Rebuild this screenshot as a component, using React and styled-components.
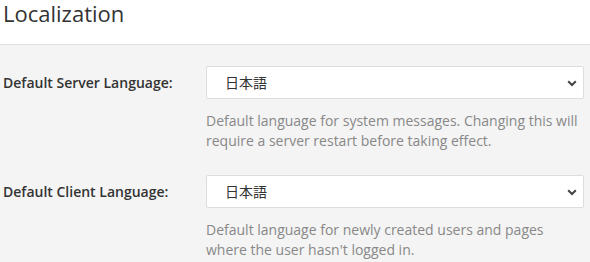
import React from "react";
import styled, { createGlobalStyle } from "styled-components";

const Global = createGlobalStyle`
  html, body { margin: 0; padding: 0; background: #f4f4f4; }
  body { font-family: "Open Sans", "Noto Sans CJK JP", sans-serif; color: #333; }
`;

const Page = styled.div`
  width: 590px;
  height: 262px;
  overflow: hidden;
  background: #f4f4f4;
`;

const Header = styled.div`
  background: #fff;
  height: 44px;
  border-bottom: 1px solid #e0e0e0;
  box-sizing: content-box;
`;

const Title = styled.h3`
  margin: 0;
  padding: 0 0 0 3px;
  font-size: 22px;
  font-weight: 400;
  line-height: 27px;
  color: #333;
`;

const Body = styled.div`
  padding: 21px 6px 0 3px;
  display: flex;
  flex-direction: column;
  gap: 24px;
`;

const Row = styled.div`
  display: grid;
  grid-template-columns: 203px 1fr;
  align-items: start;
`;

const Label = styled.label`
  font-size: 14px;
  font-weight: 600;
  line-height: 20px;
  padding-top: 7px;
  color: #333;
`;

const Field = styled.div`
  display: flex;
  flex-direction: column;
`;

const SelectWrap = styled.div`
  position: relative;
  height: 33px;
`;

const Select = styled.select`
  appearance: none;
  -webkit-appearance: none;
  width: 100%;
  height: 33px;
  box-sizing: border-box;
  border: 1px solid #ddd;
  border-radius: 2px;
  background: #fff;
  padding: 0 30px 0 18px;
  font-family: "Open Sans", "Noto Sans CJK JP", sans-serif;
  font-size: 14px;
  color: #333;
  outline: none;
`;

const Chevron = styled.svg`
  position: absolute;
  right: 7px;
  top: 14px;
  pointer-events: none;
`;

const Help = styled.p`
  margin: 12px 0 0;
  font-size: 14px;
  line-height: 20px;
  color: #888;
`;

const SettingRow = ({ label, help }) => (
  <Row>
    <Label>{label}</Label>
    <Field>
      <SelectWrap>
        <Select defaultValue="ja">
          <option value="ja">日本語</option>
        </Select>
        <Chevron width="10" height="7" viewBox="0 0 10 7">
          <path d="M1.2 1.2 L5 5 L8.8 1.2" fill="none" stroke="#444" strokeWidth="2" />
        </Chevron>
      </SelectWrap>
      <Help>{help}</Help>
    </Field>
  </Row>
);

export default function App() {
  return (
    <Page>
      <Global />
      <Header>
        <Title>Localization</Title>
      </Header>
      <Body>
        <SettingRow
          label="Default Server Language:"
          help="Default language for system messages. Changing this will require a server restart before taking effect."
        />
        <SettingRow
          label="Default Client Language:"
          help="Default language for newly created users and pages where the user hasn't logged in."
        />
      </Body>
    </Page>
  );
}
